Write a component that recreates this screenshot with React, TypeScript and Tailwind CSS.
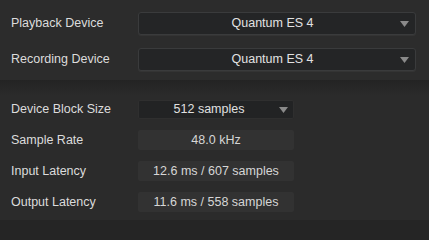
const font = { fontFamily: '"Liberation Sans", Arial, sans-serif' };

function Arrow() {
  return (
    <svg className="w-[9px] h-[6px] text-[#8a8a8a]" viewBox="0 0 9 6" fill="currentColor">
      <path d="M0 0h9L4.5 6z" />
    </svg>
  );
}

function DeviceSelect({ value }: { value: string }) {
  return (
    <div className="flex-1 h-[23px] flex items-center rounded-[3px] border border-[#3a3b3c] bg-[#242526] shadow-[0_1px_0_#343434]">
      <span className="flex-1 text-center pl-[6px] text-[12.5px] text-[#e2e2e2]">{value}</span>
      <div className="pr-[6px]">
        <Arrow />
      </div>
    </div>
  );
}

function Row({ label, children, h }: { label: string; children: React.ReactNode; h: string }) {
  return (
    <div className={`flex items-center ${h}`}>
      <span className="w-[127px] text-[12.5px] text-[#dcdcdc]">{label}</span>
      {children}
    </div>
  );
}

function ValueBox({ value }: { value: string }) {
  return (
    <div className="w-[156px] h-[20px] flex items-center justify-center rounded-[2px] bg-[#323232] text-[12.5px] text-[#d6d6d6]">
      {value}
    </div>
  );
}

export default function App() {
  return (
    <div className="w-[429px] h-[240px] bg-[#2b2b2b] flex flex-col" style={font}>
      <div className="pl-[11px] pr-[13px] pt-[12px] flex flex-col gap-[13px] h-[80px] bg-[#2c2c2c]">
        <Row label="Playback Device" h="h-[23px]">
          <DeviceSelect value="Quantum ES 4" />
        </Row>
        <Row label="Recording Device" h="h-[23px]">
          <DeviceSelect value="Quantum ES 4" />
        </Row>
      </div>
      <div className="h-[16px] bg-gradient-to-b from-[#232323] to-[#2b2b2b]" />
      <div className="pl-[11px] pt-[4px] flex flex-col gap-[11px] h-[124px]">
        <Row label="Device Block Size" h="h-[19px]">
          <div className="w-[156px] h-[19px] flex items-center rounded-[2px] bg-[#222324] border border-[#2f2f2f]">
            <span className="flex-1 text-center text-[12.5px] text-[#e0e0e0]">512 samples</span>
            <div className="pr-[5px]">
              <Arrow />
            </div>
          </div>
        </Row>
        <Row label="Sample Rate" h="h-[20px]">
          <ValueBox value="48.0 kHz" />
        </Row>
        <Row label="Input Latency" h="h-[20px]">
          <ValueBox value="12.6 ms / 607 samples" />
        </Row>
        <Row label="Output Latency" h="h-[20px]">
          <ValueBox value="11.6 ms / 558 samples" />
        </Row>
      </div>
      <div className="flex-1 bg-[#252525]" />
    </div>
  );
}
